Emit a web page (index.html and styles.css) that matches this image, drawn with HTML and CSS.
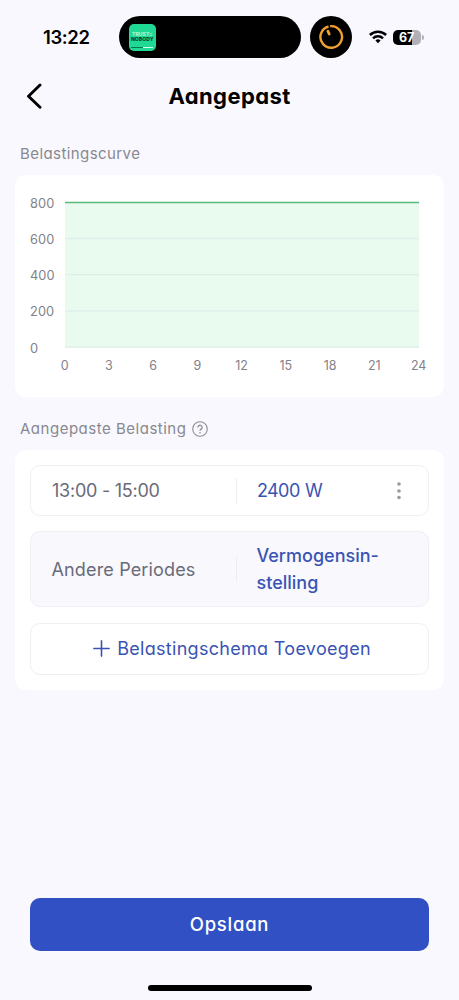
FILE: index.html
```html
<!DOCTYPE html>
<html lang="nl">
<head>
<meta charset="utf-8">
<meta name="viewport" content="width=device-width, initial-scale=1">
<title>Aangepast</title>
<link rel="stylesheet" href="styles.css">
</head>
<body>
<div class="screen">
  <header class="status">
    <span class="clock">13:22</span>
    <div class="island">
      <div class="cover"><span class="cover-a">TRUST≡</span><span class="cover-b">NOBODY</span><i class="cover-line"></i></div>
    </div>
    <div class="timer">
      <svg width="26" height="26" viewBox="0 0 26 26" fill="none" stroke="#f0a030" stroke-width="2.4"><path d="M12.2 2.2A10.8 10.8 0 1 1 10.5 2.5"/><path d="M9.9 7.2l1.3 2.8" stroke-width="2.8" stroke-linecap="round"/></svg>
    </div>
    <svg class="wifi" width="18" height="14" viewBox="0 0 18 14" fill="none" stroke="#000" stroke-width="2.5"><path d="M.9 5a11.6 11.6 0 0 1 16.2 0"/><path d="M4 8.3a7.2 7.2 0 0 1 10 0"/><path d="M9 13.2l-2.6-2.7a3.8 3.8 0 0 1 5.2 0z" fill="#000" stroke="none"/></svg>
    <div class="battery"><span>67</span></div>
    <i class="battery-cap"></i>
  </header>
  <nav class="nav">
    <svg class="back" width="18" height="26" viewBox="0 0 18 26" fill="none" stroke="#000" stroke-width="2.9" stroke-linecap="round" stroke-linejoin="round"><path d="M15 2L3.5 13.2 15 24.2"/></svg>
    <h1 class="title">Aangepast</h1>
  </nav>
  <h2 class="label label-curve">Belastingscurve</h2>
  <section class="card chart">
    <div class="y-axis"><span>800</span><span>600</span><span>400</span><span>200</span><span>0</span></div>
    <svg class="plot" width="354" height="148" viewBox="0 0 354 148">
      <path d="M0 2h354v145H0z" fill="#e9faee"/>
      <path d="M0 38.5h354M0 74.6h354M0 110.8h354M0 147h354" stroke="#e0eeea" stroke-width="1.3"/>
      <path d="M0 2.4h354" stroke="#58bd77" stroke-width="1.5"/>
    </svg>
    <div class="x-axis"><span>0</span><span>3</span><span>6</span><span>9</span><span>12</span><span>15</span><span>18</span><span>21</span><span>24</span></div>
  </section>
  <h2 class="label label-load"><span>Aangepaste Belasting</span>
    <svg width="16" height="16" viewBox="0 0 16 16" fill="none" stroke="#8d8d94" stroke-width="1.1"><circle cx="8" cy="8" r="7.3"/><path d="M5.9 6.4a2.1 2.1 0 1 1 3.3 1.7C8.3 8.7 8 9 8 9.8" stroke-width="1.3"/><circle cx="8" cy="11.7" r=".8" fill="#8d8d94" stroke="none"/></svg>
  </h2>
  <section class="card list">
    <div class="row row-period">
      <span class="period">13:00 - 15:00</span><i class="divider"></i><span class="watt">2400 W</span>
      <svg class="more" width="4" height="18" viewBox="0 0 4 18" fill="#9a9a9a"><circle cx="2" cy="2" r="1.8"/><circle cx="2" cy="9" r="1.8"/><circle cx="2" cy="15.5" r="1.8"/></svg>
    </div>
    <div class="row row-other">
      <span class="other">Andere Periodes</span><i class="divider"></i><span class="setting">Vermogensin-<br>stelling</span>
    </div>
    <div class="row row-add">
      <svg width="17" height="17" viewBox="0 0 17 17" stroke="#3752b4" stroke-width="1.6" stroke-linecap="round"><path d="M8.5 .9v15.2M.9 8.5h15.2"/></svg>
      <span>Belastingschema Toevoegen</span>
    </div>
  </section>
  <button class="save">Opslaan</button>
  <div class="home"></div>
</div>
</body>
</html>
```
FILE: styles.css
```css
* { box-sizing: border-box; }
body { margin: 0; }
.screen {
  width: 459px; height: 1000px; overflow: hidden;
  display: flex; flex-direction: column;
  background: #f8f8fe;
  font-family: Inter, sans-serif;
  font-weight: 380;
  font-feature-settings: "cv11" 1;
}
.status { display: flex; align-items: center; height: 58px; padding: 16px 0 0 43px; flex: none; }
.clock { width: 76px; font-size: 18.5px; font-weight: 600; letter-spacing: -.4px; line-height: 42px; font-feature-settings: normal; }
.island { width: 182px; height: 42px; border-radius: 21px; background: #000; padding: 8px 10px; }
.cover {
  width: 26.5px; height: 26.5px; border-radius: 5px; background: #20d994;
  display: flex; flex-direction: column; align-items: center; padding-top: 8px; overflow: hidden;
  font-size: 5px; font-weight: 800; line-height: 5px; letter-spacing: .1px;
}
.cover-a { color: #a9f5d6; }
.cover-b { color: #08382a; }
.cover-line { width: 22px; height: 1px; margin-top: 4.5px; background: linear-gradient(90deg, #0a7550 55%, #d7fff0 55%); }
.timer { width: 42px; height: 42px; margin-left: 9px; border-radius: 50%; background: #000; display: flex; align-items: center; justify-content: center; }
.wifi { margin-left: 17px; }
.battery {
  width: 28px; height: 15px; margin-left: 6px; border-radius: 5px; padding-right: 1px;
  background: linear-gradient(90deg, #000 67%, #b1b1b5 67%);
  color: #fff; font-size: 12.5px; font-weight: 700; line-height: 15px; text-align: center; letter-spacing: -.3px;
}
.battery-cap { width: 1.5px; height: 5px; margin-left: 1px; background: #b1b1b5; border-radius: 0 2px 2px 0; }
.nav { display: grid; grid-template-columns: 60px 1fr 60px; align-items: center; height: 77px; flex: none; }
.back { margin: 0 0 2px 25px; }
.title { margin: 0 0 1px; text-align: center; font-size: 22px; font-weight: 700; letter-spacing: .4px; }
.label { margin: 0; padding-left: 20px; display: flex; align-items: center; color: #88888f; font-size: 15px; font-weight: 380; letter-spacing: .42px; flex: none; }
.label-curve { height: 40px; padding-bottom: 4px; }
.label-load { height: 53px; gap: 5.5px; padding-top: 10px; letter-spacing: .51px; }
.card { margin: 0 15px; background: #fff; border-radius: 11px; flex: none; }
.chart { height: 222px; padding: 20px 10px 0 15px; display: grid; grid-template-columns: 35px 354px; grid-template-rows: 160px 40px; color: #828289; font-size: 12.8px; }
.y-axis { display: flex; flex-direction: column; padding-top: .8px; line-height: 16.2px; gap: 20px; letter-spacing: .1px; }
.plot { margin-top: 5px; }
.x-axis { grid-column: 2; display: flex; justify-content: space-between; margin: 3px -11.5px 0 -12.5px; line-height: 16px; font-size: 12.5px; letter-spacing: -.2px; }
.x-axis span { width: 24px; text-align: center; }
.list { height: 239.5px; padding: 15px 15px 0; display: flex; flex-direction: column; }
.row { display: flex; align-items: center; border: 1px solid #efeff4; border-radius: 10px; font-size: 18px; color: #696b78; }
.row-period { height: 51px; padding: 0 27px 0 21px; }
.row-other { height: 76px; margin-top: 15px; padding-left: 20.5px; background: #f8f8fd; }
.row-add { height: 52px; margin-top: 15.5px; padding-left: 5px; justify-content: center; gap: 7px; color: #3a54b4; letter-spacing: .3px; }
.period, .other { width: 184px; }
.period { letter-spacing: -.25px; }
.other { letter-spacing: .15px; }
.divider { width: 1px; height: 26px; background: #ededf2; }
.watt, .setting { margin-left: 20px; color: #3a54b4; }
.watt { letter-spacing: -.6px; word-spacing: 1px; }
.setting { font-weight: 500; line-height: 27px; letter-spacing: 0; }
.more { margin-left: auto; }
.save {
  margin: 208.5px 30px 0; height: 52.5px; flex: none; border: 0; border-radius: 10px;
  background: #3050c3; color: #fff; font: inherit; font-feature-settings: inherit;
  font-size: 18.5px; font-weight: 450; letter-spacing: .75px;
}
.home { width: 164px; height: 6px; margin: 34px auto 0; border-radius: 3px; background: #000; flex: none; }
```
